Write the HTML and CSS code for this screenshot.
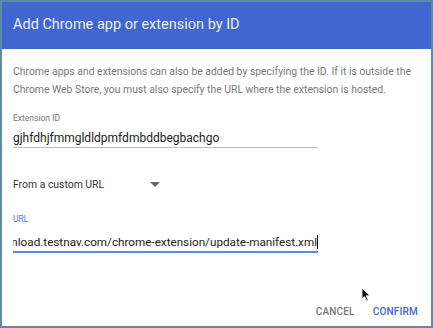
FILE: index.html
```html
<!DOCTYPE html>
<html>
<head>
<meta charset="utf-8">
<link rel="stylesheet" href="styles.css">
</head>
<body>
<div class="dialog">
  <div class="header">Add Chrome app or extension by ID</div>
  <div class="body">
    <p class="desc">Chrome apps and extensions can also be added by specifying the ID. If it is outside the Chrome Web Store, you must also specify the URL where the extension is hosted.</p>
    <div class="field">
      <div class="label">Extension ID</div>
      <div class="input">gjhfdhjfmmgldldpmfdmbddbegbachgo</div>
    </div>
    <div class="select">
      <span class="select-text">From a custom URL</span>
      <svg class="arrow" width="10" height="5" viewBox="0 0 10 5"><path d="M0 0h10L5 5z" fill="#666"/></svg>
    </div>
    <div class="field focused">
      <div class="label">URL</div>
      <div class="input url"><span class="url-text">https://download.testnav.com/chrome-extension/update-manifest.xml</span><span class="caret"></span></div>
    </div>
    <div class="actions">
      <span class="btn cancel">CANCEL</span>
      <span class="btn confirm">CONFIRM</span>
      <svg class="cursor" width="10" height="15" viewBox="0 0 10 15"><path d="M1 1v11l2.6-2.5 2 4.2 1.6-.8-2-4.1H9z" fill="#111" stroke="#fff" stroke-width="0.8"/></svg>
    </div>
  </div>
</div>
</body>
</html>
```
FILE: styles.css
```css
* { box-sizing: border-box; }
html, body { margin: 0; padding: 0; background: #fff; }
body { font-family: Roboto, "Noto Sans", sans-serif; }
.dialog {
  width: 433px;
  height: 328px;
  border: 2px solid #5f8aa6;
  display: flex;
  flex-direction: column;
  background: #fff;
}
.header {
  background: #4166cf;
  color: rgba(255,255,255,0.92);
  font-size: 14.5px;
  height: 47px;
  padding: 13px 0 0 11px;
  line-height: 20px;
}
.body {
  flex: 1;
  padding: 14px 0 0 11px;
  position: relative;
  display: flex;
  flex-direction: column;
}
.desc {
  margin: 0;
  font-size: 10.4px;
  line-height: 18px;
  color: #7a7a7a;
  width: 410px;
}
.field { margin-top: 13px; width: 305px; }
.label { font-size: 8.5px; color: #777; line-height: 12px; }
.input {
  font-size: 12px;
  color: #222;
  line-height: 16px;
  padding-top: 6px;
  padding-bottom: 1px;
  border-bottom: 1px solid #bdbdbd;
}
.select {
  margin-top: 28px;
  display: flex;
  align-items: center;
  font-size: 10.4px;
  color: #333;
  height: 16px;
}
.select-text { width: 137px; }
.arrow { display: block; }
.field.focused { margin-top: 21px; }
.focused .label { color: #4a78d8; }
.url {
  display: flex;
  justify-content: flex-end;
  overflow: hidden;
  white-space: nowrap;
  font-size: 11.7px;
  border-bottom: 2px solid #5a8ae6;
  padding-top: 9px;
  padding-bottom: 1px;
  align-items: center;
}
.url-text { flex: none; }
.caret { flex: none; width: 1px; height: 14px; background: #111; }
.actions {
  margin-top: auto;
  display: flex;
  justify-content: flex-end;
  gap: 18px;
  padding: 0 13px 9px 0;
  position: relative;
  font-size: 10px;
  font-weight: 500;
  letter-spacing: 0.2px;
}
.cancel { color: #777; }
.confirm { color: #4166cf; }
.cursor { position: absolute; left: 348px; top: -19px; }
```
